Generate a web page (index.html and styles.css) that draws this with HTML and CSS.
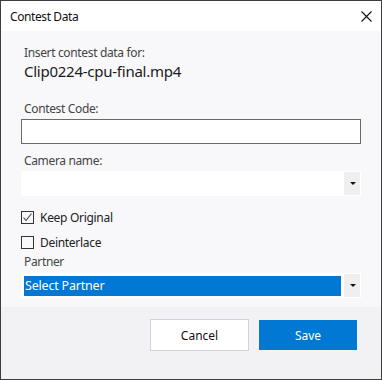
FILE: index.html
```html
<!DOCTYPE html>
<html>
<head>
<meta charset="utf-8">
<link rel="stylesheet" href="styles.css">
</head>
<body>
<div class="window">
  <div class="titlebar">
    <span class="title">Contest Data</span>
    <svg class="close" width="11" height="11" viewBox="0 0 11 11"><path d="M0.5 0.5 L10.5 10.5 M10.5 0.5 L0.5 10.5" stroke="#111" stroke-width="1.1" fill="none"/></svg>
  </div>
  <div class="content">
    <div class="label intro">Insert contest data for:</div>
    <div class="filename">Clip0224-cpu-final.mp4</div>
    <div class="label code-label">Contest Code:</div>
    <div class="textbox"></div>
    <div class="label camera-label">Camera name:</div>
    <div class="combo">
      <div class="combo-field"></div>
      <div class="combo-btn"><span class="arrow"></span></div>
    </div>
    <div class="check first">
      <span class="box"><svg width="11" height="11" viewBox="0 0 11 11"><path d="M1.5 5.5 L4 8.5 L9.5 1.5" stroke="#444" stroke-width="1.1" fill="none"/></svg></span>
      <span class="check-label">Keep Original</span>
    </div>
    <div class="check">
      <span class="box"></span>
      <span class="check-label">Deinterlace</span>
    </div>
    <div class="label partner">Partner</div>
    <div class="combo">
      <div class="combo-field"><div class="selected">Select Partner</div></div>
      <div class="combo-btn"><span class="arrow"></span></div>
    </div>
  </div>
  <div class="footer">
    <button class="btn cancel">Cancel</button>
    <button class="btn save">Save</button>
  </div>
</div>
</body>
</html>
```
FILE: styles.css
```css
html, body {
  margin: 0;
  padding: 0;
}
body {
  font-family: "Noto Sans", "Open Sans", sans-serif;
  font-size: 12px;
}
.window {
  width: 382px;
  height: 380px;
  box-sizing: border-box;
  border: 1px solid #3d3d3d;
  display: flex;
  flex-direction: column;
  background: #f8f8fa;
}
.titlebar {
  height: 30px;
  background: #ffffff;
  display: flex;
  align-items: center;
  justify-content: space-between;
  padding: 0 9px 0 9px;
  flex: none;
}
.title {
  color: #111;
  font-size: 12px;
  letter-spacing: -0.4px;
}
.close {
  display: block;
}
.content {
  flex: 1;
  padding: 13px 20px 0 20px;
  display: flex;
  flex-direction: column;
  background: #f8f8fa;
}
.label {
  color: #444;
  line-height: 16px;
  padding-left: 3px;
  letter-spacing: -0.35px;
}
.intro {
  line-height: 17px;
}
.filename {
  font-size: 15px;
  line-height: 21px;
  color: #1a1a1a;
  padding-left: 3px;
  letter-spacing: -0.25px;
}
.code-label {
  margin-top: 19px;
  margin-bottom: 2px;
}
.camera-label {
  margin-top: 9px;
  margin-bottom: 2px;
}
.textbox {
  height: 25px;
  box-sizing: border-box;
  border: 1px solid #6a6a6a;
  background: #fff;
}
.combo {
  height: 25px;
  background: #fff;
  display: flex;
  box-sizing: border-box;
  padding: 1px 1px 1px 0;
}
.combo-field {
  flex: 1;
  padding: 2px 3px 1px 3px;
  display: flex;
}
.selected {
  flex: 1;
  background: #0078d4;
  color: #fff;
  font-size: 12.5px;
  line-height: 19px;
  padding-left: 1px;
  letter-spacing: -0.2px;
}
.combo-btn {
  width: 16px;
  background: #efefef;
  display: flex;
  align-items: center;
  justify-content: center;
}
.arrow {
  width: 0;
  height: 0;
  border-left: 3px solid transparent;
  border-right: 3px solid transparent;
  border-top: 3px solid #111;
  margin-left: 1px;
}
.check {
  display: flex;
  align-items: center;
  height: 13px;
  margin-top: 12px;
}
.check.first {
  margin-top: 15px;
}
.box {
  width: 13px;
  height: 13px;
  box-sizing: border-box;
  border: 1px solid #333;
  display: flex;
  align-items: center;
  justify-content: center;
}
.box svg {
  display: block;
}
.check-label {
  margin-left: 6px;
  color: #222;
  font-size: 12px;
  letter-spacing: -0.3px;
}
.partner {
  margin-top: 5px;
  margin-bottom: 3px;
}
.footer {
  height: 60px;
  background: #f2f2f5;
  flex: none;
  display: flex;
  justify-content: flex-end;
  align-items: flex-start;
  padding: 12px 24px 0 0;
  gap: 10px;
}
.btn {
  font-family: "Noto Sans", "Open Sans", sans-serif;
  font-size: 12px;
  height: 32px;
  width: 99px;
  margin: 0;
  padding: 0;
  box-sizing: border-box;
  cursor: default;
}
.cancel {
  background: #fff;
  border: 1px solid #cfd0e0;
  color: #111;
}
.save {
  background: #0078d4;
  border: 1px solid #0078d4;
  color: #fff;
  width: 98px;
  height: 30px;
  margin-top: 1px;
}
```
